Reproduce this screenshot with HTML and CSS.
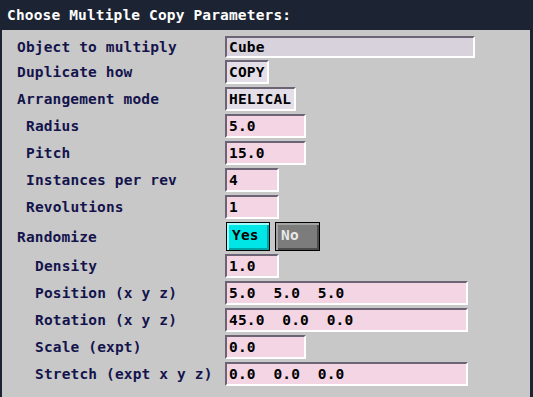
FILE: index.html
```html
<!DOCTYPE html>
<html lang="en">
<head>
    <meta charset="UTF-8">
    <meta name="viewport" content="width=device-width, initial-scale=1.0">
    <title>Choose Multiple Copy Parameters</title>
    <link rel="stylesheet" href="styles.css">
</head>
<body>
    <div class="title">Choose Multiple Copy Parameters:</div>
    <div class="panel">
        <div class="row first">
            <div class="label">Object to multiply</div>
            <div class="field obj w-wide">Cube</div>
        </div>
        <div class="row tight">
            <div class="label">Duplicate how</div>
            <div class="field choice w-xs">COPY</div>
        </div>
        <div class="row">
            <div class="label">Arrangement mode</div>
            <div class="field choice w-md">HELICAL</div>
        </div>
        <div class="row">
            <div class="label sub">Radius</div>
            <div class="field w-lg">5.0</div>
        </div>
        <div class="row">
            <div class="label sub">Pitch</div>
            <div class="field w-lg">15.0</div>
        </div>
        <div class="row">
            <div class="label sub">Instances per rev</div>
            <div class="field w-sm">4</div>
        </div>
        <div class="row">
            <div class="label sub">Revolutions</div>
            <div class="field w-sm">1</div>
        </div>
        <div class="row">
            <div class="label">Randomize</div>
            <div class="toggle">
                <div class="btn yes">Yes</div>
                <div class="btn no">No</div>
            </div>
        </div>
        <div class="row">
            <div class="label subsub">Density</div>
            <div class="field w-sm">1.0</div>
        </div>
        <div class="row">
            <div class="label subsub">Position (x y z)</div>
            <div class="field w-xl">5.0  5.0  5.0</div>
        </div>
        <div class="row">
            <div class="label subsub">Rotation (x y z)</div>
            <div class="field w-xl">45.0  0.0  0.0</div>
        </div>
        <div class="row">
            <div class="label subsub">Scale (expt)</div>
            <div class="field w-lg">0.0</div>
        </div>
        <div class="row">
            <div class="label subsub">Stretch (expt x y z)</div>
            <div class="field w-xl">0.0  0.0  0.0</div>
        </div>
    </div>
</body>
</html>
```

FILE: styles.css
```css
html, body {
    margin: 0;
    height: 100%;
}
body {
    width: 533px;
    font-family: "DejaVu Sans Mono", "Liberation Mono", monospace;
    font-weight: bold;
    font-size: 14.5px;
    letter-spacing: 0.15px;
    background: #1c2433;
    overflow: hidden;
}
.title {
    height: 30px;
    line-height: 30px;
    padding-left: 7px;
    color: #ffffff;
    background: #1c2433;
}
.panel {
    height: 367px;
    box-sizing: border-box;
    padding-top: 6px;
    border-left: 2px solid #1c2433;
    border-right: 3px solid #1c2433;
    background: #c8c8c9;
}
.row {
    display: flex;
    align-items: center;
    margin-top: 3px;
}
.row.first {
    margin-top: 0;
}
.row.tight {
    margin-top: 2px;
}
.label {
    width: 223px;
    box-sizing: border-box;
    padding-left: 15px;
    color: #14144c;
    white-space: pre;
}
.label.sub {
    padding-left: 24px;
}
.label.subsub {
    padding-left: 33px;
}
.field {
    height: 24px;
    box-sizing: border-box;
    padding-left: 2px;
    line-height: 21px;
    color: #000000;
    white-space: pre;
    border: 2px solid;
    border-color: #6c6474 #ffffff #ffffff #6c6474;
    background: #f3d5e4;
}
.field.obj {
    height: 22px;
    line-height: 19px;
    background: #d8d2dc;
}
.field.choice {
    background: #e3dee8;
}
.w-xs { width: 44px; }
.w-sm { width: 54px; }
.w-md { width: 71px; }
.w-lg { width: 81px; }
.w-xl { width: 243px; }
.w-wide { width: 250px; }

.toggle {
    display: flex;
    gap: 5px;
    margin-left: 1px;
}
.btn {
    height: 29px;
    box-sizing: border-box;
    padding-left: 5px;
    line-height: 25px;
    border: 1px solid #000000;
    box-shadow: inset 2px 2px 0 #9ffcfc, inset -2px -2px 0 #00a4a4;
}
.btn.yes {
    width: 44px;
    color: #000000;
    background: #00e6e6;
}
.btn.no {
    width: 45px;
    color: #e8e8e8;
    background: #7c7c7c;
    box-shadow: inset 2px 2px 0 #a4a4a4, inset -2px -2px 0 #4c4c4c;
}
```
